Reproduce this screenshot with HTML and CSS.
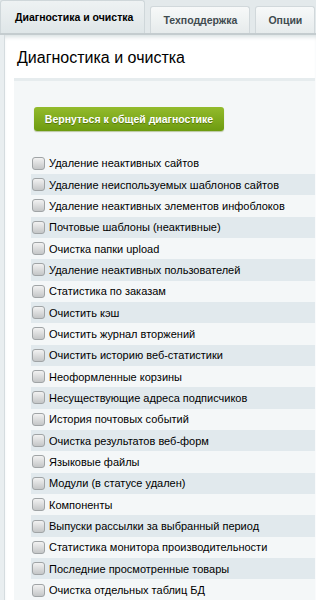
FILE: index.html
```html
<!DOCTYPE html>
<html>
<head>
    <title>Диагностика и очистка</title>
    <link rel="stylesheet" href="styles.css">
</head>
<body>
    <div class="tabs">
        <div class="tab active">Диагностика и очистка</div>
        <div class="tab">Техподдержка</div>
        <div class="tab">Опции</div>
    </div>
    <div class="page">
        <h1 class="title">Диагностика и очистка</h1>
        <div class="panel">
            <div class="btn-wrap">
                <a class="btn-green" href="#">Вернуться к общей диагностике</a>
            </div>
            <ul class="clean-list">
                <li><span class="chk"></span>Удаление неактивных сайтов</li>
                <li><span class="chk"></span>Удаление неиспользуемых шаблонов сайтов</li>
                <li><span class="chk"></span>Удаление неактивных элементов инфоблоков</li>
                <li><span class="chk"></span>Почтовые шаблоны (неактивные)</li>
                <li><span class="chk"></span>Очистка папки upload</li>
                <li><span class="chk"></span>Удаление неактивных пользователей</li>
                <li><span class="chk"></span>Статистика по заказам</li>
                <li><span class="chk"></span>Очистить кэш</li>
                <li><span class="chk"></span>Очистить журнал вторжений</li>
                <li><span class="chk"></span>Очистить историю веб-статистики</li>
                <li><span class="chk"></span>Неоформленные корзины</li>
                <li><span class="chk"></span>Несуществующие адреса подписчиков</li>
                <li><span class="chk"></span>История почтовых событий</li>
                <li><span class="chk"></span>Очистка результатов веб-форм</li>
                <li><span class="chk"></span>Языковые файлы</li>
                <li><span class="chk"></span>Модули (в статусе удален)</li>
                <li><span class="chk"></span>Компоненты</li>
                <li><span class="chk"></span>Выпуски рассылки за выбранный период</li>
                <li><span class="chk"></span>Статистика монитора производительности</li>
                <li><span class="chk"></span>Последние просмотренные товары</li>
                <li><span class="chk"></span>Очистка отдельных таблиц БД</li>
            </ul>
        </div>
    </div>
</body>
</html>
```

FILE: styles.css
```css
body {
    margin: 0;
    height: 600px;
    background: #e9eef0;
    font-family: "Liberation Sans", Arial, sans-serif;
    color: #000;
    overflow: hidden;
}

.tabs {
    display: flex;
    align-items: flex-end;
    gap: 5px;
    height: 33px;
    border-bottom: 2px solid #c4cccf;
    background: #e3e9eb;
    overflow: hidden;
}

.tab {
    height: 26px;
    line-height: 26px;
    padding: 0 12px;
    font-size: 10.5px;
    font-weight: bold;
    color: #3f4b4f;
    background: linear-gradient(#f7f9f9, #e6ebec);
    border: 1px solid #d1d8db;
    border-bottom: none;
    border-radius: 3px 3px 0 0;
    white-space: nowrap;
}

.tab.active {
    height: 32px;
    line-height: 32px;
    padding: 0 11px 0 14px;
    color: #000;
    background: linear-gradient(#eef2f3, #dfe6e8);
    border-color: #cfd7da;
}

.page {
    margin-left: 4px;
    padding: 13px 0 0 9px;
    background: #fff;
    border-left: 1px solid #d5dcdf;
    box-shadow: inset 0 4px 4px -2px #d9e0e2;
    height: 600px;
}

.title {
    margin: 0 0 10px 3px;
    font-size: 16px;
    font-weight: normal;
    line-height: 20px;
}

.panel {
    background: #f4f7f8;
    border-top: 3px solid #e6ecee;
    margin-right: 1px;
    height: 600px;
}

.btn-wrap {
    box-sizing: border-box;
    padding: 26px 0 0 20px;
    height: 71.5px;
}

.btn-green {
    display: inline-block;
    width: 190px;
    height: 24px;
    line-height: 24px;
    text-align: center;
    font-size: 10.5px;
    font-weight: bold;
    color: #fff;
    text-decoration: none;
    text-shadow: 0 1px 0 #56780c;
    background: linear-gradient(#93bb2c, #6d9b10);
    border-radius: 3px;
    box-shadow: 0 1px 1px #b9c6a0;
}

.clean-list {
    list-style: none;
    margin: 0 0 0 17px;
    padding: 0;
}

.clean-list li {
    display: flex;
    align-items: center;
    height: 21.35px;
    font-size: 11px;
    white-space: nowrap;
}

.clean-list li:nth-child(even) {
    background: #e1e9ed;
}

.chk {
    width: 11px;
    height: 11px;
    margin: 0 4px 0 1px;
    border: 1px solid #a0a4a6;
    border-radius: 3px;
    background: linear-gradient(#f2f2f2, #c4c6c7);
    flex-shrink: 0;
}
```
